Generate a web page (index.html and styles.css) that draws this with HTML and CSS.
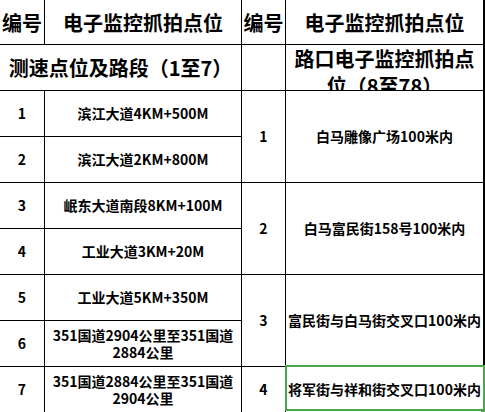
FILE: index.html
```html
<!DOCTYPE html>
<html lang="zh-CN">
<head>
<meta charset="utf-8">
<title>电子监控抓拍点位</title>
<link rel="stylesheet" href="styles.css">
</head>
<body>
<div class="sheet">
  <div class="cell head">编号</div>
  <div class="cell head">电子监控抓拍点位</div>
  <div class="cell head">编号</div>
  <div class="cell head">电子监控抓拍点位</div>

  <div class="cell head span2c">测速点位及路段（1至7）</div>
  <div class="cell"></div>
  <div class="cell head top">路口电子监控抓拍点位（8至78）</div>

  <div class="cell">1</div>
  <div class="cell">滨江大道4KM+500M</div>
  <div class="cell span2r">1</div>
  <div class="cell span2r">白马雕像广场100米内</div>

  <div class="cell">2</div>
  <div class="cell">滨江大道2KM+800M</div>

  <div class="cell">3</div>
  <div class="cell">岷东大道南段8KM+100M</div>
  <div class="cell span2r">2</div>
  <div class="cell span2r">白马富民街158号100米内</div>

  <div class="cell">4</div>
  <div class="cell">工业大道3KM+20M</div>

  <div class="cell">5</div>
  <div class="cell">工业大道5KM+350M</div>
  <div class="cell span2r">3</div>
  <div class="cell span2r">富民街与白马街交叉口100米内</div>

  <div class="cell">6</div>
  <div class="cell">351国道2904公里至351国道2884公里</div>

  <div class="cell">7</div>
  <div class="cell">351国道2884公里至351国道2904公里</div>
  <div class="cell">4</div>
  <div class="cell selected">将军街与祥和街交叉口100米内</div>
</div>
</body>
</html>
```

FILE: styles.css
```css
html, body {
  margin: 0;
  padding: 0;
  background: #fff;
}

body {
  width: 485px;
  height: 412px;
  overflow: hidden;
  font-family: "Noto Sans CJK SC", "Noto Sans", sans-serif;
  color: #000;
}

.sheet {
  display: grid;
  grid-template-columns: 44px 196px 43px 197px;
  grid-template-rows: 44px repeat(8, 45px);
  gap: 1px;
  padding: 0 1px 0 0;
  width: 484px;
  background: #000;
}

.cell {
  background: #fff;
  display: flex;
  align-items: center;
  justify-content: center;
  text-align: center;
  padding: 0 1px;
  font-size: 14px;
  font-weight: 700;
  line-height: 17px;
  position: relative;
}

.head {
  font-size: 20px;
  line-height: 27px;
}

.top {
  align-items: flex-start;
  overflow: hidden;
}

.span2c {
  grid-column: span 2;
}

.span2r {
  grid-row: span 2;
}

.selected::before {
  content: "";
  position: absolute;
  top: -2px;
  left: -1px;
  right: -2px;
  bottom: 1px;
  border: 2px solid #4ba64b;
}

.selected::after {
  content: "";
  position: absolute;
  right: -3px;
  bottom: -1px;
  width: 5px;
  height: 4px;
  background: #4ba64b;
}
```
